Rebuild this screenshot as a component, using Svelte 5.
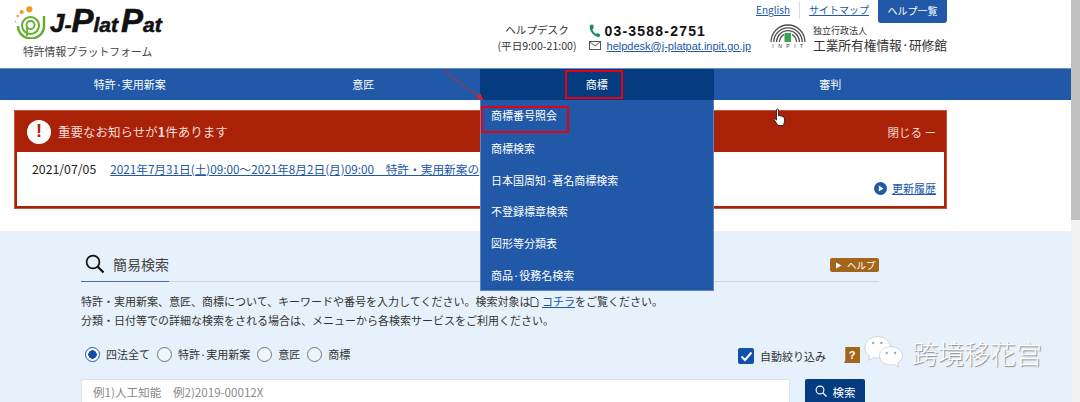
<script>
  const navItems = ["特許·実用新案", "意匠", "商標", "審判"];
  const menuItems = ["商標番号照会", "商標検索", "日本国周知·著名商標検索", "不登録標章検索", "図形等分類表", "商品·役務名検索"];
  const radios = ["四法全て", "特許·実用新案", "意匠", "商標"];
</script>

<div class="page">
  <div class="main">
    <header class="header">
      <div class="logo">
        <div class="logo-top">
          <svg class="logo-mark" width="34" height="34" viewBox="0 0 34 34">
            <circle cx="15.300" cy="4.300" r="3.100" fill="#f39a1f" />
            <circle cx="7.700" cy="7" r="2.100" fill="#f39a1f" />
            <circle cx="3.700" cy="11" r="1.200" fill="#f39a1f" />
            <circle cx="1.500" cy="16.500" r=".8" fill="#f39a1f" />
            <g fill="none" stroke="#62ae2d">
              <path d="M30 11V21A13 12.500 0 0 1 4 21" stroke-width="2.400" />
              <circle cx="16.500" cy="20.500" r="8.500" stroke-width="2" />
              <circle cx="16.500" cy="20" r="4" stroke-width="1.800" />
              <path d="M13 21V31" stroke-width="1.800" />
            </g>
          </svg>
          <span class="logo-name"><span class="j">J</span>-<span class="big">P</span>lat<span class="big gap">P</span>at</span>
        </div>
        <div class="logo-sub">特許情報プラットフォーム</div>
      </div>

      <div class="header-right">
        <div class="top-links">
          <a href="#en">English</a>
          <span class="sep"></span>
          <a href="#map">サイトマップ</a>
          <span class="help-list">ヘルプ一覧</span>
        </div>
        <div class="contact-row">
          <div class="desk">
            <div>ヘルプデスク</div>
            <div>(平日9:00-21:00)</div>
          </div>
          <div class="contact">
            <div class="phone">
              <svg width="12" height="14" viewBox="0 0 12 14">
                <path d="M2 0.500 4.200 0.800 4.800 4 3.400 5.200C3.900 7.400 5.400 9.300 7.300 10L8.800 8.900 11.300 10.800 10.300 13C5.500 13.300 0.300 7.400 0.600 2Z" fill="#138a6c" />
              </svg>
              <span>03-3588-2751</span>
            </div>
            <div class="mail">
              <svg width="12" height="10" viewBox="0 0 12 10">
                <rect x="0.500" y="0.500" width="11" height="8" fill="none" stroke="#555" />
                <path d="M.5.500 6 5l5.500-4.500" fill="none" stroke="#555" />
              </svg>
              <a href="#mail">helpdesk@j-platpat.inpit.go.jp</a>
            </div>
          </div>
          <div class="inpit">
            <div class="inpit-mark">
              <svg width="36" height="19" viewBox="0 0 36 19">
                <g fill="none" stroke="#4d4d4d" stroke-width="1.300">
                  <path d="M1 19a17 17 0 0 1 34 0" />
                  <path d="M3.800 19a14.200 14.200 0 0 1 28.400 0" />
                  <path d="M6.600 19a11.400 11.400 0 0 1 22.800 0" />
                  <path d="M9.400 19a8.600 8.600 0 0 1 17.200 0" />
                </g>
                <rect x="14" y="9" width="8" height="10" fill="#fff" />
                <rect x="14.500" y="10" width="6.500" height="9" fill="#35a652" />
              </svg>
              <span>INPIT</span>
            </div>
            <div class="inpit-text">
              <div class="inpit-small">独立行政法人</div>
              <div class="inpit-big">工業所有権情報·研修館</div>
            </div>
          </div>
        </div>
      </div>
    </header>

    <nav class="nav">
      <div class="nav-inner">
        {#each navItems as item, i}
          <div class="nav-item" class:active={i === 2}>
            {#if i === 2}
              <span class="marked">{item}</span>
            {:else}
              {item}
            {/if}
            {#if i === 2}
              <ul class="menu">
                {#each menuItems as m, j}
                  <li class:marked-row={j === 0}>{m}</li>
                {/each}
              </ul>
            {/if}
          </div>
        {/each}
      </div>
    </nav>

    <section class="notice-wrap">
      <div class="notice">
        <div class="notice-head">
          <span class="alert">!</span>
          <span class="notice-title">重要なお知らせが<b>1</b>件あります</span>
          <span class="close">閉じる ー</span>
        </div>
        <div class="notice-body">
          <div class="notice-line">
            <span class="date">2021/07/05</span>
            <a href="#news">2021年7月31日(土)09:00～2021年8月2日(月)09:00　特許・実用新案の</a>
          </div>
          <div class="history">
            <svg width="13" height="13" viewBox="0 0 13 13">
              <circle cx="6.500" cy="6.500" r="6.500" fill="#2158a8" />
              <path d="M4.800 3.500 9.500 6.500 4.800 9.500Z" fill="#fff" />
            </svg>
            <a href="#history">更新履歴</a>
          </div>
        </div>
      </div>
    </section>

    <section class="search">
      <div class="search-inner">
        <div class="search-head">
          <div class="search-tab">
            <svg width="20" height="20" viewBox="0 0 20 20">
              <circle cx="8" cy="8" r="6.400" fill="none" stroke="#111" stroke-width="1.700" />
              <path d="M12.800 12.800 18.500 18.500" stroke="#111" stroke-width="2.200" />
            </svg>
            <span>簡易検索</span>
          </div>
          <span class="help-btn">
            <svg width="7" height="7" viewBox="0 0 7 7"><path d="M1 .5 6.500 3.500 1 6.500Z" fill="#fff" /></svg>
            ヘルプ
          </span>
        </div>

        <p class="desc">
          特許・実用新案、意匠、商標について、キーワードや番号を入力してください。検索対象は<svg class="doc" width="9" height="10" viewBox="0 0 9 10"><path d="M1 .5h4.500L8 3v6.500H1z" fill="none" stroke="#444" /></svg> <a href="#here">コチラ</a>をご覧ください。<br />
          分類・日付等での詳細な検索をされる場合は、メニューから各検索サービスをご利用ください。
        </p>

        <div class="option-row">
          <div class="radios">
            {#each radios as r, i}
              <span class="radio-item">
                <span class="radio" class:on={i === 0}></span>
                {r}
              </span>
            {/each}
          </div>
          <div class="auto">
            <span class="check">
              <svg width="13" height="11" viewBox="0 0 13 11"><path d="M1.500 5.500 5 9l6.500-7.500" fill="none" stroke="#fff" stroke-width="2" /></svg>
            </span>
            <span>自動絞り込み</span>
            <span class="question">?</span>
          </div>
        </div>

        <div class="input-row">
          <div class="input">例1)人工知能　例2)2019-00012X</div>
          <button class="search-btn">
            <svg width="12" height="12" viewBox="0 0 12 12">
              <circle cx="5" cy="5" r="3.900" fill="none" stroke="#fff" stroke-width="1.100" />
              <path d="M8 8l3.500 3.500" stroke="#fff" stroke-width="1.300" />
            </svg>
            検索
          </button>
        </div>
      </div>
    </section>

    <svg class="arrow" width="42" height="32" viewBox="0 0 42 32">
      <path d="M1 1 39 29" stroke="#d8232a" stroke-width="1" />
      <path d="M41 31 33 28 37 23Z" fill="#d8232a" />
    </svg>

    <svg class="cursor" width="13" height="19" viewBox="0 0 13 19">
      <path d="M3.500 1.500c1-1 2-.5 2 .5v6l1-.5 1 .5 1 0 1.500 1 1.500 .5v4L10.500 17.500H5L1 11.500l.5-1 2 1.500V2Z" fill="#fff" stroke="#222" stroke-width=".9" />
    </svg>

    <div class="watermark">
      <svg width="42" height="36" viewBox="0 0 46 38">
        <path d="M15 1C7 1 1 6.500 1 13c0 4 2 7 5 9l-1 5 6-3c2 .500 3 .500 5 .500C23 24.500 29 19.500 29 13S23 1 15 1Z" fill="#fff" stroke="#bbb" stroke-width=".6" />
        <path d="M29 12c-7 0-12 4.500-12 10s5 10 12 10c1.500 0 3-.200 4-.500l5 3-1-4.500c3-2 5-4.800 5-8 0-5.500-6-10-13-10Z" fill="#fff" stroke="#bbb" stroke-width=".6" />
        <circle cx="10" cy="8" r="1.400" fill="#aaa" /><circle cx="19" cy="8" r="1.400" fill="#aaa" />
        <circle cx="25" cy="19" r="1.300" fill="#aaa" /><circle cx="34" cy="19" r="1.300" fill="#aaa" />
      </svg>
      <span>跨境移花宫</span>
    </div>
  </div>

  <div class="scrollbar"><div class="thumb"></div></div>
</div>

<style>
  :global(body) {
    margin: 0;
    background: #fff;
    overflow: hidden;
  }

  .page {
    display: flex;
    width: 1080px;
    height: 402px;
    overflow: hidden;
    font-family: "Noto Sans CJK JP", "Liberation Sans", sans-serif;
    font-size: 11px;
    color: #333;
  }

  .main {
    position: relative;
    width: 1071px;
    flex: none;
  }

  .scrollbar {
    flex: 1;
    background: #f1f1f1;
  }

  .thumb {
    height: 220px;
    background: #c1c1c1;
  }

  a {
    color: #2158a8;
  }

  /* header */
  .header {
    display: flex;
    justify-content: space-between;
    height: 68px;
    padding: 0 124px 0 14px;
  }

  .logo {
    padding-top: 5px;
  }

  .logo-top {
    display: flex;
    align-items: flex-end;
    height: 34px;
  }

  .logo-name {
    margin-left: 2px;
    font-family: "Liberation Sans", sans-serif;
    font-size: 21px;
    font-weight: bold;
    font-style: italic;
    line-height: 28px;
    color: #111;
    -webkit-text-stroke: 0.6px #111;
    white-space: nowrap;
  }

  .logo-name .j {
    font-size: 26px;
    line-height: 28px;
  }

  .logo-name .big {
    font-size: 33px;
    line-height: 28px;
  }

  .logo-name .gap {
    margin-left: 3px;
  }

  .logo-sub {
    margin: 5px 0 0 9px;
    font-size: 10.800px;
    line-height: 14px;
    color: #444;
  }

  .header-right {
    display: flex;
    flex-direction: column;
    align-items: flex-end;
  }

  .top-links {
    display: flex;
    align-items: flex-start;
    height: 23px;
    font-size: 10px;
    line-height: 20px;
  }

  .sep {
    width: 1px;
    height: 18px;
    margin: 1px 9px 0;
    background: #ddd;
  }

  .help-list {
    width: 69px;
    height: 23px;
    margin-left: 9px;
    background: #2158a8;
    border-radius: 0 0 3px 3px;
    color: #fff;
    text-align: center;
    line-height: 21px;
  }

  .contact-row {
    display: flex;
    align-items: flex-start;
    margin-top: -1px;
  }

  .desk {
    width: 81px;
    font-size: 10.600px;
    line-height: 16px;
    text-align: center;
    white-space: nowrap;
  }

  .contact {
    margin-left: 11px;
  }

  .phone {
    display: flex;
    align-items: center;
    gap: 4px;
    height: 18px;
    font-family: "Liberation Sans", sans-serif;
    font-size: 14px;
    font-weight: bold;
    color: #111;
    letter-spacing: 1.200px;
  }

  .mail {
    display: flex;
    align-items: center;
    gap: 6px;
    height: 12px;
    font-family: "Liberation Sans", sans-serif;
    font-size: 11px;
  }

  .inpit {
    display: flex;
    margin-left: 19px;
  }

  .inpit-mark {
    display: flex;
    flex-direction: column;
    align-items: center;
    width: 36px;
    padding-top: 1px;
  }

  .inpit-mark span {
    font-family: "Liberation Sans", sans-serif;
    font-size: 5px;
    line-height: 9px;
    letter-spacing: 4.500px;
    margin-right: -4px;
    white-space: nowrap;
  }

  .inpit-text {
    margin-left: 7px;
  }

  .inpit-small {
    font-size: 9px;
    line-height: 13px;
    margin-top: 2px;
  }

  .inpit-big {
    font-size: 12.700px;
    line-height: 16px;
    white-space: nowrap;
  }

  /* nav */
  .nav {
    height: 31px;
    background: #2158a8;
    border-top: 1px solid #6d8fc4;
    color: #fff;
  }

  .nav-inner {
    display: grid;
    grid-template-columns: repeat(4, 233.500px);
    margin-left: 13px;
  }

  .nav-item {
    position: relative;
    height: 31px;
    text-align: center;
    line-height: 30px;
  }

  .nav-item.active {
    background: #053c7f;
  }

  .marked {
    display: inline-block;
    width: 58px;
    height: 29px;
    margin: 1px 6px 0 0;
    padding-left: 6px;
    box-sizing: border-box;
    border: 2.500px solid #e60012;
    line-height: 25px;
    vertical-align: top;
  }

  .menu {
    position: absolute;
    top: 31px;
    left: 0;
    z-index: 2;
    width: 234px;
    height: 191px;
    margin: 0;
    padding: 0;
    box-sizing: border-box;
    background: #2158a8;
    border: 1px solid #5f84bd;
    border-top: 0;
    list-style: none;
    text-align: left;
  }

  .menu li {
    height: 31.700px;
    padding-left: 10px;
    line-height: 31px;
    white-space: nowrap;
  }

  .menu li.marked-row {
    width: 76px;
    height: 23px;
    margin: 6px 0 0;
    padding-left: 8px;
    border: 2.500px solid #e60012;
    line-height: 15px;
  }

  /* notice */
  .notice-wrap {
    padding: 10px 124px 22px 14px;
  }

  .notice {
    height: 99px;
    box-sizing: border-box;
    background: #a92208;
    border: 1px solid #c2543e;
    padding: 0 2px 2px;
    display: flex;
    flex-direction: column;
  }

  .notice-head {
    display: flex;
    align-items: center;
    height: 41px;
    padding: 0 0 0 10px;
    color: #f3dcd6;
    font-size: 12.500px;
  }

  .alert {
    display: flex;
    align-items: center;
    justify-content: center;
    width: 24px;
    height: 24px;
    border-radius: 50%;
    background: #fff;
    color: #a92208;
    font-family: "Liberation Sans", sans-serif;
    font-size: 18px;
    font-weight: bold;
  }

  .notice-title {
    margin-left: 7px;
  }

  .close {
    margin: 0 8px 0 auto;
    font-size: 11.500px;
  }

  .notice-body {
    flex: 1;
    display: flex;
    flex-direction: column;
    background: #fff;
    padding: 8px 8px 0 15px;
  }

  .notice-line {
    display: flex;
    gap: 14px;
    font-size: 11.700px;
    line-height: 18px;
    white-space: nowrap;
  }

  .date {
    color: #222;
    font-size: 12.300px;
  }

  .history {
    display: flex;
    justify-content: flex-end;
    align-items: center;
    gap: 5px;
    margin-top: 2px;
  }

  /* search */
  .search {
    height: 172px;
    background: #e6f1fb;
    padding-left: 81px;
  }

  .search-inner {
    width: 798px;
    padding-top: 17px;
  }

  .search-head {
    display: flex;
    justify-content: space-between;
    align-items: flex-end;
    height: 33px;
    border-bottom: 1px solid #d0d4d8;
  }

  .search-tab {
    display: flex;
    align-items: center;
    gap: 8px;
    width: 88px;
    height: 33px;
    padding: 0 0 3px 4px;
    box-sizing: border-box;
    border-bottom: 1px solid #3f6fbd;
    margin-bottom: -1px;
    font-size: 14px;
    color: #444;
    white-space: nowrap;
  }

  .help-btn {
    display: flex;
    align-items: center;
    gap: 5px;
    width: 49px;
    height: 14px;
    margin-bottom: 9px;
    padding-left: 5px;
    box-sizing: border-box;
    background: #a3651a;
    border-radius: 2px;
    color: #fff;
    font-size: 9.500px;
    line-height: 14px;
  }

  .desc {
    margin: 10px 0 0;
    font-size: 11px;
    line-height: 19px;
    color: #333;
    white-space: nowrap;
  }

  .doc {
    vertical-align: -1px;
  }

  .option-row {
    display: flex;
    justify-content: space-between;
    align-items: center;
    height: 26px;
    margin-top: 11px;
    padding-left: 4px;
  }

  .radios {
    display: flex;
    gap: 7px;
    font-size: 11px;
  }

  .radio-item {
    display: flex;
    align-items: center;
    gap: 6px;
  }

  .radio {
    width: 15px;
    height: 15px;
    box-sizing: border-box;
    border: 1px solid #777;
    border-radius: 50%;
    background: #eef5fb;
  }

  .radio.on {
    border: 1px solid #2158a8;
    background: radial-gradient(circle, #1150a8 0 4px, #fff 4.500px);
  }

  .auto {
    display: flex;
    align-items: center;
    gap: 6px;
    margin: 4px 19px 0 0;
    font-size: 11px;
  }

  .check {
    display: flex;
    align-items: center;
    justify-content: center;
    width: 16px;
    height: 16px;
    background: #1150a8;
    border-radius: 2px;
  }

  .question {
    width: 16px;
    height: 16px;
    margin: -2px 0 0 12px;
    background: #a3651a;
    color: #fff;
    font-family: "Liberation Sans", sans-serif;
    font-size: 11px;
    font-weight: bold;
    text-align: center;
    line-height: 16px;
    clip-path: polygon(8% 0, 100% 0, 100% 100%, 0 100%, 8% 85%);
  }

  .input-row {
    display: flex;
    gap: 15px;
    margin-top: 12px;
  }

  .input {
    width: 709px;
    height: 40px;
    padding-left: 11px;
    box-sizing: border-box;
    background: #fff;
    border: 1px solid #dde3e8;
    border-radius: 2px;
    color: #8a8a8a;
    font-size: 11.600px;
    line-height: 24px;
  }

  .search-btn {
    display: flex;
    justify-content: center;
    gap: 6px;
    width: 60px;
    height: 40px;
    padding: 6px 0 0;
    background: #053c7f;
    border: 0;
    border-radius: 2px;
    color: #fff;
    font-family: inherit;
    font-size: 11.500px;
    line-height: 14px;
  }

  /* overlays */
  .arrow {
    position: absolute;
    top: 70px;
    left: 443px;
  }

  .cursor {
    position: absolute;
    top: 108px;
    left: 773px;
    z-index: 3;
  }

  .watermark {
    position: absolute;
    top: 334px;
    left: 864px;
    display: flex;
    align-items: center;
    gap: 6px;
    font-size: 26px;
    font-weight: 300;
    color: #fff;
    text-shadow: 1px 1px 1px #888;
    white-space: nowrap;
  }
</style>
